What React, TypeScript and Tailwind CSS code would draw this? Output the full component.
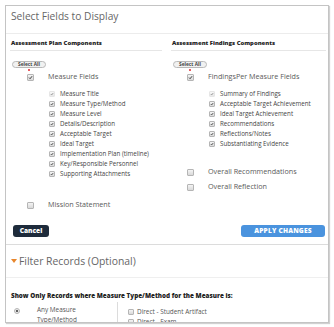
import React from 'react';

type BoxProps = { checked?: boolean; faded?: boolean; big?: boolean };

const Box: React.FC<BoxProps> = ({ checked, faded, big }) => (
  <span
    className={`flex items-center justify-center rounded-[1px] border bg-gradient-to-b from-[#f4f4f4] to-[#d9d9d9] ${
      big ? 'w-[7px] h-[7px]' : 'w-[6px] h-[6px]'
    } ${faded ? 'border-[#d6d6d6] opacity-60' : 'border-[#b5b5b5]'}`}
  >
    {checked && (
      <svg viewBox="0 0 10 10" className="w-full h-full">
        <path d="M2 5.2 L4.2 7.4 L8.2 2.4" fill="none" stroke="#2b2b2b" strokeWidth="1.8" />
      </svg>
    )}
  </span>
);

const SelectAll = () => (
  <div className="relative ml-[2px] mt-[10px] w-[34px] h-[7px]">
    <div className="w-full h-full rounded-full border border-[#b9b9b9] bg-[#f1f1f1] flex items-center justify-center text-[4.8px] font-bold leading-none text-[#444]">
      Select All
    </div>
    <span className="absolute left-[16px] top-[8px] w-[2px] h-[2px] rounded-full bg-[#e0262b]" />
  </div>
);

const Sub = ({ label, faded, pl }: { label: string; faded?: boolean; pl: string }) => (
  <div className={`h-[10px] flex items-center gap-[5px] ${pl}`}>
    <Box checked faded={faded} />
    <span className="text-[6.2px] leading-none text-[#444]">{label}</span>
  </div>
);

const Main = ({ label, checked, pl, mt }: { label: string; checked?: boolean; pl: string; mt: string }) => (
  <div className={`h-[10px] flex items-center gap-[14px] ${pl} ${mt}`}>
    <Box big checked={checked} />
    <span className="text-[7.2px] leading-none text-[#5a5a5a]">{label}</span>
  </div>
);

const Heading = ({ children }: { children: React.ReactNode }) => (
  <div className="pt-[4px] pb-[2px] pl-[1px] border-b border-[#e6e6e6] text-[5.9px] leading-[10px] font-extrabold text-[#222]">
    {children}
  </div>
);

export default function App() {
  const plan = [
    'Measure Type/Method',
    'Measure Level',
    'Details/Description',
    'Acceptable Target',
    'Ideal Target',
    'Implementation Plan (timeline)',
    'Key/Responsible Personnel',
    'Supporting Attachments',
  ];
  const findings = [
    'Acceptable Target Achievement',
    'Ideal Target Achievement',
    'Recommendations',
    'Reflections/Notes',
    'Substantiating Evidence',
  ];

  return (
    <div className="w-[334px] h-[327px] bg-white overflow-hidden pt-[5px] pl-[5px] font-['Open_Sans',sans-serif]">
      <div className="w-[324px] h-[318px] border border-[#c4c4c4] shadow-[1px_1px_1px_rgba(0,0,0,0.18)] overflow-hidden flex flex-col">
        {/* Title */}
        <div className="h-[28px] shrink-0 border-b border-[#ececec] pl-[5px] pt-[3px] text-[10.2px] leading-[14px] text-[#666]">
          Select Fields to Display
        </div>

        {/* Columns */}
        <div className="h-[191px] shrink-0 pl-[4px] grid grid-cols-[152px_155px] gap-x-[9px]">
          <div>
            <Heading>Assessment Plan Components</Heading>
            <SelectAll />
            <Main label="Measure Fields" checked pl="pl-[17px]" mt="mt-[4px]" />
            <div className="mt-[7px]">
              <Sub label="Measure Title" faded pl="pl-[39px]" />
              {plan.map((p) => (
                <Sub key={p} label={p} pl="pl-[39px]" />
              ))}
            </div>
            <Main label="Mission Statement" pl="pl-[17px]" mt="mt-[21px]" />
          </div>
          <div>
            <Heading>Assessment Findings Components</Heading>
            <SelectAll />
            <Main label="FindingsPer Measure Fields" checked pl="pl-[16px]" mt="mt-[4px]" />
            <div className="mt-[7px]">
              <Sub label="Summary of Findings" faded pl="pl-[38px]" />
              {findings.map((p) => (
                <Sub key={p} label={p} pl="pl-[38px]" />
              ))}
            </div>
            <Main label="Overall Recommendations" pl="pl-[16px]" mt="mt-[18px]" />
            <Main label="Overall Reflection" pl="pl-[16px]" mt="mt-[5px]" />
          </div>
        </div>

        {/* Buttons */}
        <div className="h-[20px] shrink-0 border-b border-[#dcdcdc] pl-[7px] pr-[3px] flex justify-between items-start">
          <button className="w-[36px] h-[12px] rounded-[3px] bg-[#1e2b3b] text-white text-[6.6px] font-extrabold leading-none">
            Cancel
          </button>
          <button className="w-[84px] h-[12px] rounded-[3px] bg-[#4a93de] text-white text-[6.6px] font-extrabold leading-none tracking-[0.2px]">
            APPLY CHANGES
          </button>
        </div>

        {/* Filter header */}
        <div className="h-[33px] shrink-0 border-b border-[#efefef] pl-[5px] flex items-center gap-[2px]">
          <svg viewBox="0 0 6 4" className="w-[6px] h-[4px]">
            <path d="M0 0 H6 L3 4 Z" fill="#e8862c" />
          </svg>
          <span className="text-[10.4px] leading-none text-[#666]">Filter Records (Optional)</span>
        </div>

        <div className="pl-[5px] pt-[13px] text-[6.3px] leading-[10px] font-extrabold text-[#222]">
          Show Only Records where Measure Type/Method for the Measure is:
        </div>

        <div className="flex mt-[1px]">
          <div className="w-[111px] shrink-0 flex pl-[8px] pt-[3px] gap-[17px]">
            <span className="mt-[3px] w-[6px] h-[6px] rounded-full border border-[#b5b5b5] bg-[#e9e9e9] flex items-center justify-center">
              <span className="w-[2px] h-[2px] rounded-full bg-[#333]" />
            </span>
            <span className="text-[6.4px] leading-[10px] text-[#555]">
              Any Measure
              <br />
              Type/Method
            </span>
          </div>
          <div className="border-l border-[#dcdcdc] pl-[10px] pt-[5px]">
            <div className="h-[10px] flex items-center gap-[3px]">
              <Box />
              <span className="text-[6.4px] leading-none text-[#555]">Direct - Student Artifact</span>
            </div>
            <div className="h-[10px] flex items-center gap-[3px]">
              <Box />
              <span className="text-[6.4px] leading-none text-[#555]">Direct - Exam</span>
            </div>
          </div>
        </div>
      </div>
    </div>
  );
}
